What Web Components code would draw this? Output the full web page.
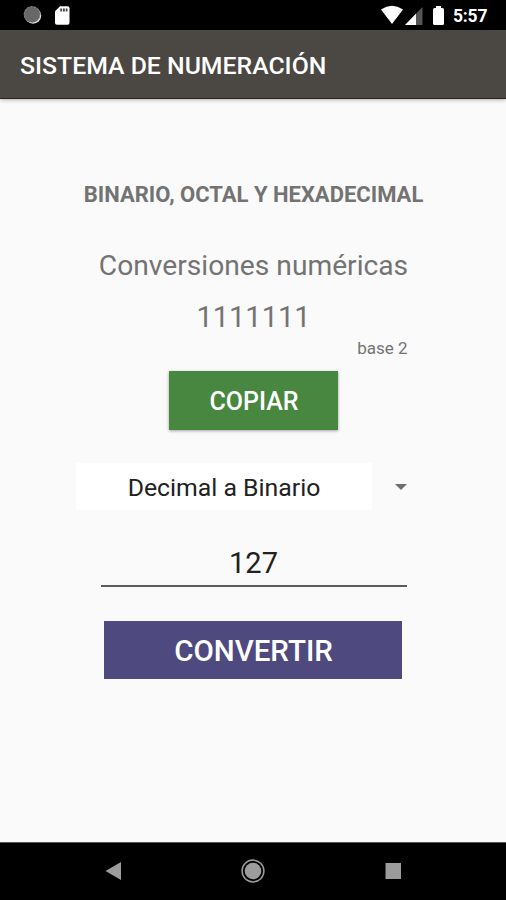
<!DOCTYPE html>
<html lang="es">
<head>
<meta charset="utf-8">
<title>Sistema de numeración</title>
<style>
	html, body {
		margin: 0;
		height: 100%;
	}

	body {
		font-family: Roboto, sans-serif;
		background: #fafafa;
		overflow: hidden;
	}
</style>
</head>
<body>
<sn-app></sn-app>

<script>
class SNElement extends HTMLElement {
	constructor() {
		super();
		this.attachShadow({ mode: 'open' });
	}

	connectedCallback() {
		this.shadowRoot.innerHTML = this.render();
	}
}

class SNStatusBar extends SNElement {
	render() {
		return `
		<style>
			:host {
				display: flex;
				justify-content: space-between;
				height: 30px;
				background: #000;
				color: #fff;
			}
			svg { display: block; }
			.right { display: flex; }
			.time {
				width: 53px;
				font-size: 17.5px;
				font-weight: 700;
				line-height: 32px;
				letter-spacing: -0.2px;
			}
		</style>
		<svg width="90" height="30">
			<circle cx="33" cy="15.5" r="8.2" fill="#e4e4e4"/>
			<circle cx="32" cy="14.4" r="8.2" fill="#686868"/>
			<circle cx="32" cy="14.4" r="7.8" fill="none" stroke="#8a8a8a" stroke-dasharray="2 1.5"/>
			<path d="M60 6.2h7.5q2 0 2 2v14.5q0 2-2 2H57q-2 0-2-2V11.2z" fill="#fff"/>
			<path d="M60.3 8.5h1.8v3h-1.8zM63 8.5h1.8v3H63zM65.700 8.5h1.8v3h-1.8z" fill="#444"/>
		</svg>
		<div class="right">
			<svg width="73" height="30" viewBox="380 0 73 30">
				<path d="M381 9.5Q392 2.2 403 9.5L392 24z" fill="#fff"/>
				<path d="M422.5 7v18H405z" fill="#555"/>
				<path d="M416 13.7V25H405z" fill="#fff"/>
				<path d="M436 6h5v2h1.5q1.5 0 1.5 1.5v14q0 1.5-1.5 1.5h-8q-1.5 0-1.5-1.5v-14q0-1.5 1.5-1.5h1.5z" fill="#fff"/>
			</svg>
			<span class="time">5:57</span>
		</div>
		`;
	}
}

customElements.define('sn-status-bar', SNStatusBar);

class SNAppBar extends SNElement {
	render() {
		return `
		<style>
			:host {
				display: block;
				box-sizing: border-box;
				height: 69px;
				padding-left: 20px;
				background: #4b4743;
				border-bottom: 1px solid #351f14;
				box-shadow: 0 1px 4px rgba(0, 0, 0, 0.3);
				color: #fff;
				font-size: 24.8px;
				font-weight: 500;
				line-height: 71px;
				white-space: nowrap;
				z-index: 1;
			}
		</style>
		<slot></slot>
		`;
	}
}

customElements.define('sn-app-bar', SNAppBar);

class SNButton extends SNElement {
	render() {
		return `
		<style>
			:host { display: block; }
			button {
				display: block;
				width: 100%;
				height: 100%;
				padding: 1px 0 0 1px;
				border: none;
				background: var(--sn-button-bg);
				box-shadow: var(--sn-button-shadow, none);
				color: #fff;
				font: inherit;
				font-weight: 500;
			}
		</style>
		<button type="button"><slot></slot></button>
		`;
	}
}

customElements.define('sn-button', SNButton);

class SNSpinner extends SNElement {
	render() {
		return `
		<style>
			:host {
				display: flex;
				align-items: center;
				gap: 23px;
				height: 47px;
			}
			.value {
				width: 296px;
				background: #fff;
				color: #212121;
				font-size: 24.8px;
				line-height: 49px;
				height: 47px;
				text-align: center;
			}
		</style>
		<span class="value"><slot></slot></span>
		<svg width="12" height="6"><path d="M0 0h12L6 6z" fill="#6e6e6e"/></svg>
		`;
	}
}

customElements.define('sn-spinner', SNSpinner);

class SNField extends SNElement {
	render() {
		return `
		<style>
			:host {
				display: block;
				box-sizing: border-box;
				width: 306px;
				height: 43px;
				border-bottom: 2px solid #5c5c5c;
				color: #212121;
				font-size: 29px;
				line-height: 39px;
				text-align: center;
			}
		</style>
		<slot></slot>
		`;
	}
}

customElements.define('sn-field', SNField);

class SNConverter extends SNElement {
	render() {
		return `
		<style>
			:host {
				display: flex;
				flex-direction: column;
				align-items: center;
				flex: 1;
				padding: 81px 0 0 1px;
				color: #737373;
				white-space: nowrap;
			}
			h1 {
				margin: 0;
				font-size: 22px;
				font-weight: 700;
				line-height: 30px;
			}
			.subtitle {
				margin-top: 37px;
				font-size: 28.2px;
				line-height: 38px;
			}
			.result {
				margin-top: 13px;
				font-size: 29px;
				line-height: 38px;
			}
			.base {
				width: 308px;
				margin-top: 2px;
				font-size: 17px;
				line-height: 20px;
				text-align: right;
			}
			.copy {
				width: 169px;
				height: 59px;
				margin-top: 13px;
				font-size: 25px;
				--sn-button-bg: #47873f;
				--sn-button-shadow: 0 1px 3px rgba(0, 0, 0, 0.35);
			}
			sn-spinner {
				align-self: flex-start;
				margin: 33px 0 0 75px;
			}
			sn-field { margin-top: 34px; }
			.convert {
				width: 298px;
				height: 58px;
				margin: 34px 1px 0 0;
				font-size: 29.5px;
				--sn-button-bg: #4e4a80;
			}
		</style>
		<h1>BINARIO, OCTAL Y HEXADECIMAL</h1>
		<div class="subtitle">Conversiones numéricas</div>
		<div class="result">1111111</div>
		<div class="base">base 2</div>
		<sn-button class="copy">COPIAR</sn-button>
		<sn-spinner>Decimal a Binario</sn-spinner>
		<sn-field>127</sn-field>
		<sn-button class="convert">CONVERTIR</sn-button>
		`;
	}
}

customElements.define('sn-converter', SNConverter);

class SNNavBar extends SNElement {
	render() {
		return `
		<style>
			:host {
				display: flex;
				box-sizing: border-box;
				align-items: center;
				justify-content: space-between;
				height: 58px;
				padding: 0 104px 2px;
				border-top: 1px solid #555;
				background: #000;
			}
			svg { display: block; }
		</style>
		<svg width="18" height="24"><path d="M1.5 12L17 3v18z" fill="#9c9c9c"/></svg>
		<svg width="24" height="24">
			<circle cx="12" cy="12" r="10.9" fill="none" stroke="#9c9c9c" stroke-width="1.5"/>
			<circle cx="12" cy="12" r="8.3" fill="#9c9c9c"/>
		</svg>
		<svg width="18" height="24"><path d="M1.5 4H17v16H1.5z" fill="#9c9c9c"/></svg>
		`;
	}
}

customElements.define('sn-nav-bar', SNNavBar);

class SNApp extends SNElement {
	render() {
		return `
		<style>
			:host {
				display: flex;
				flex-direction: column;
				height: 900px;
			}
		</style>
		<sn-status-bar></sn-status-bar>
		<sn-app-bar>SISTEMA DE NUMERACIÓN</sn-app-bar>
		<sn-converter></sn-converter>
		<sn-nav-bar></sn-nav-bar>
		`;
	}
}

customElements.define('sn-app', SNApp);
</script>
</body>
</html>
